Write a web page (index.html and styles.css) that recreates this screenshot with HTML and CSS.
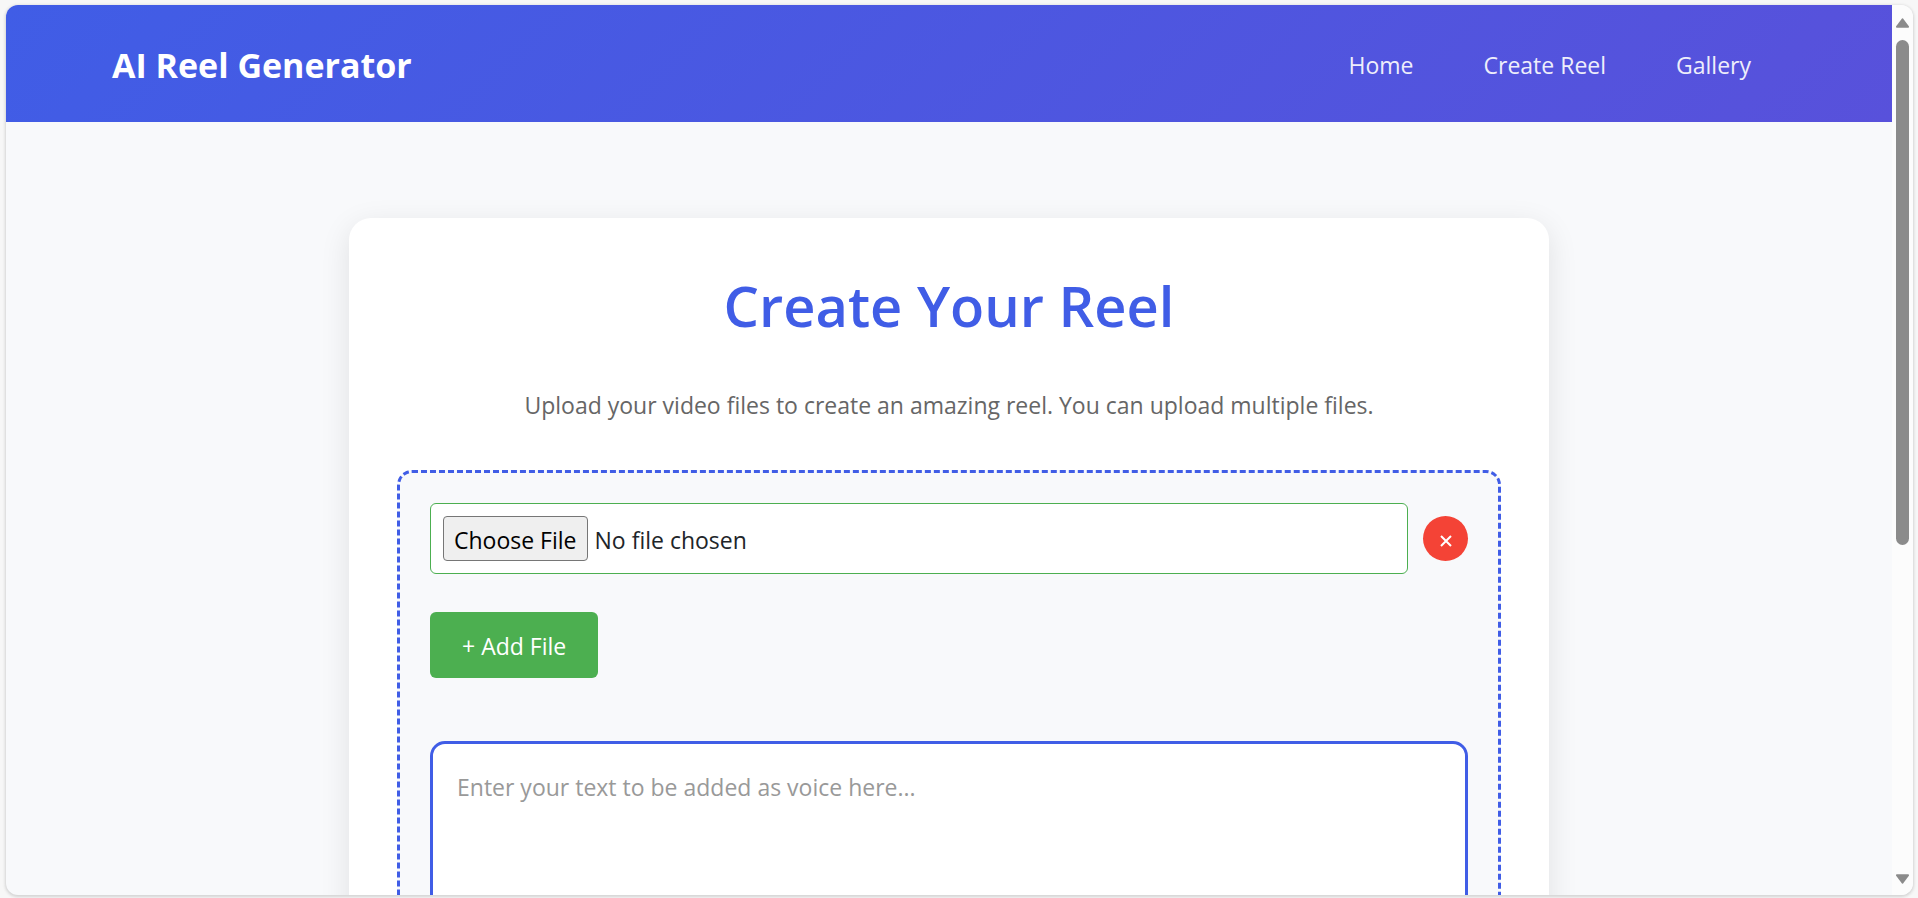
FILE: index.html
```html
<!DOCTYPE html>
<html lang="en">
<head>
<meta charset="utf-8">
<title>AI Reel Generator</title>
<link rel="stylesheet" href="styles.css">
</head>
<body>
<div class="window">
  <div class="page">
    <header class="topbar">
      <div class="logo">AI Reel Generator</div>
      <nav class="nav">
        <a href="#home">Home</a>
        <a href="#create">Create Reel</a>
        <a href="#gallery">Gallery</a>
      </nav>
    </header>
    <main class="card">
      <h1>Create Your Reel</h1>
      <p class="intro">Upload your video files to create an amazing reel. You can upload multiple files.</p>
      <form class="upload">
        <div class="file-row">
          <input class="file" type="file" aria-label="Video file">
          <button class="remove" type="button" aria-label="Remove file"><svg viewBox="0 0 12 12" width="12" height="12"><path d="M1 1L11 11M11 1L1 11" stroke="#fff" stroke-width="2" fill="none"/></svg></button>
        </div>
        <button class="add" type="button">+ Add File</button>
        <textarea class="voice" aria-label="Voice text" placeholder="Enter your text to be added as voice here..."></textarea>
      </form>
    </main>
  </div>
  <div class="scrollbar" aria-hidden="true">
    <svg class="arrow" viewBox="0 0 16 12" width="15" height="12"><path d="M8 2L14 10H2Z" fill="#8b8b8b" stroke="#8b8b8b" stroke-width="2" stroke-linejoin="round"/></svg>
    <div class="track"><div class="thumb"></div></div>
    <svg class="arrow" viewBox="0 0 16 12" width="15" height="12"><path d="M8 10L14 2H2Z" fill="#8b8b8b" stroke="#8b8b8b" stroke-width="2" stroke-linejoin="round"/></svg>
  </div>
</div>
</body>
</html>
```
FILE: styles.css
```css
* {
  box-sizing: border-box;
}

body {
  margin: 0;
  background: #f7f7f7;
  font-family: "Open Sans", "Noto Sans", sans-serif;
  font-size: 23px;
  line-height: 36px;
  color: #212529;
}

.window {
  display: flex;
  height: calc(100vh - 8px);
  margin: 5px 5px 3px 6px;
  border-radius: 12px;
  overflow: hidden;
  background: #f8f9fb;
  box-shadow: 0 1px 3px 1px #d4d4d4;
}

.page {
  flex: 1;
  overflow: hidden;
}

.topbar {
  display: flex;
  align-items: center;
  justify-content: space-between;
  height: 117px;
  padding: 3px 106px 0;
  background: linear-gradient(135deg, #405de6, #5851db);
  color: #fff;
}

.logo {
  font-size: 34px;
  font-weight: 700;
  line-height: 48px;
}

.nav {
  display: flex;
}

.nav a {
  padding: 0 35px;
  color: #fff;
  opacity: 0.9;
  text-decoration: none;
}

.card {
  max-width: 1200px;
  margin: 96px auto;
  padding: 48px;
  border-radius: 22px;
  background: #fff;
  box-shadow: 0 8px 30px rgba(0, 0, 0, 0.1);
}

h1 {
  margin: 0 0 43px;
  color: #405de6;
  font-size: 56px;
  font-weight: 600;
  line-height: 78px;
  text-align: center;
}

.intro {
  margin: 0 0 47px;
  color: #666;
  text-align: center;
}

.upload {
  padding: 30px;
  border: 3px dashed #405de6;
  border-radius: 15px;
  background: #f8f9fb;
}

.file-row {
  display: flex;
  align-items: center;
  gap: 15px;
  margin-bottom: 38px;
}

.file {
  flex: 1;
  min-width: 0;
  padding: 12px;
  border: 1px solid #4caf50;
  border-radius: 6px;
  background: #fff;
  color: #212529;
  font: inherit;
}

.file::file-selector-button {
  height: 45px;
  margin: 0 7px 0 0;
  padding: 2px 10px 0;
  border: 1px solid #767676;
  border-radius: 4px;
  background: #efefef;
  color: #000;
  font: inherit;
}

.remove {
  display: grid;
  place-items: center;
  width: 45px;
  height: 45px;
  padding: 5px 0 0;
  border: 0;
  border-radius: 50%;
  background: #f44336;
}

.add {
  display: block;
  padding: 16px 32px 14px;
  border: 0;
  border-radius: 6px;
  background: #4caf50;
  color: #fff;
  font: inherit;
}

.voice {
  display: block;
  width: 100%;
  height: 300px;
  margin-top: 63px;
  padding: 25px 24px;
  border: 3px solid #405de6;
  border-radius: 15px;
  background: #fff;
  font: inherit;
  resize: none;
}

.voice::placeholder {
  color: #999;
}

.scrollbar {
  display: flex;
  flex-direction: column;
  align-items: center;
  width: 21px;
  padding: 12px 0 10px;
  background: #fcfcfc;
}

.track {
  flex: 1;
  width: 13px;
  padding: 11px 0 18px;
}

.thumb {
  height: 62%;
  border-radius: 7px;
  background: #8b8b8b;
}
```
